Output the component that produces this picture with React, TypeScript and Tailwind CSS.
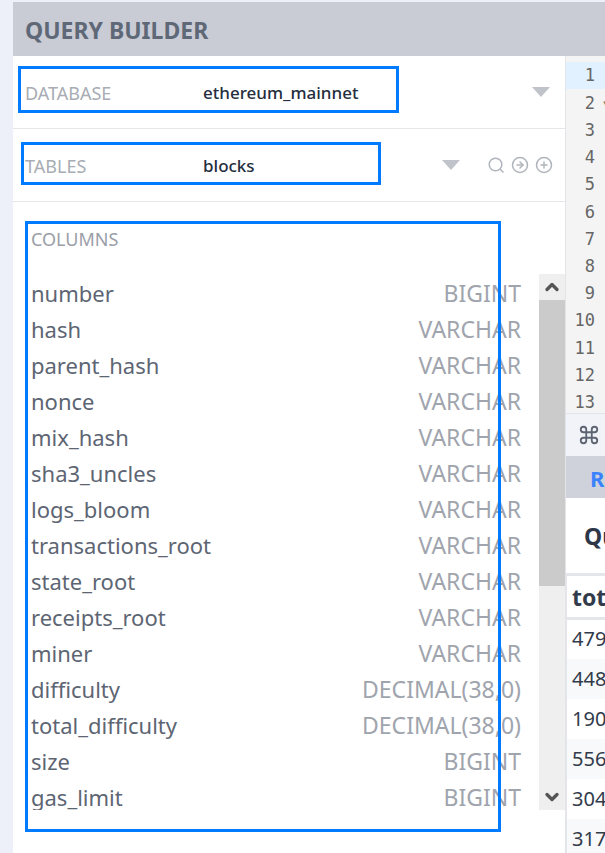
import { ChevronDown, ChevronUp, CircleArrowRight, CirclePlus, Command } from 'lucide-react';

const columns = [
  { name: 'number', type: 'BIGINT' },
  { name: 'hash', type: 'VARCHAR' },
  { name: 'parent_hash', type: 'VARCHAR' },
  { name: 'nonce', type: 'VARCHAR' },
  { name: 'mix_hash', type: 'VARCHAR' },
  { name: 'sha3_uncles', type: 'VARCHAR' },
  { name: 'logs_bloom', type: 'VARCHAR' },
  { name: 'transactions_root', type: 'VARCHAR' },
  { name: 'state_root', type: 'VARCHAR' },
  { name: 'receipts_root', type: 'VARCHAR' },
  { name: 'miner', type: 'VARCHAR' },
  { name: 'difficulty', type: 'DECIMAL(38,0)' },
  { name: 'total_difficulty', type: 'DECIMAL(38,0)' },
  { name: 'size', type: 'BIGINT' },
  { name: 'gas_limit', type: 'BIGINT' },
];

const lines = [1, 2, 3, 4, 5, 6, 7, 8, 9, 10, 11, 12, 13];
const results = ['479', '448', '190', '556', '304', '317'];

export default function App() {
  return (
    <div className="min-h-screen overflow-hidden bg-[#edf0f9] pt-0.5 pl-[13px] font-['Noto_Sans',sans-serif]">
      <header className="flex h-[54px] items-center bg-[#c9ccd5] px-3 pt-0.5">
        <h1 className="text-[23px] font-bold text-[#5f6877]">QUERY BUILDER</h1>
      </header>
      <div className="flex">
        <BuilderPanel />
        <ResultsPanel />
      </div>
    </div>
  );
}

function BuilderPanel() {
  return (
    <section className="relative min-w-0 flex-1 bg-white">
      <div className="flex h-[73px] items-center border-b border-[#e4e6ea] pr-[15px] pl-3">
        <Picker id="database" label="DATABASE" value="ethereum_mainnet" />
      </div>
      <div className="flex h-[73px] items-center border-b border-[#e4e6ea] pr-3 pl-3">
        <Picker id="tables" label="TABLES" value="blocks" />
        <div className="ml-[27px] flex gap-1.5 text-[#b0b4bc]">
          <button aria-label="Search"><SearchIcon /></button>
          <button aria-label="Open"><CircleArrowRight size={18} /></button>
          <button aria-label="Add"><CirclePlus size={18} /></button>
        </div>
      </div>

      <h2 className="mt-[25px] pl-[18px] text-[18px] leading-6 text-[#9a9ea8]">COLUMNS</h2>
      <div className="mt-[23px] flex h-[536px]">
        <ul className="min-w-0 flex-1 overflow-hidden pt-px pr-[18px] pl-[18px] text-[22px] leading-[36px]">
          {columns.map((c) => (
            <li key={c.name} className="flex justify-between">
              <span className="text-[#5d6573]">{c.name}</span>
              <span className="text-[23px] text-[#a0a4ad]">{c.type}</span>
            </li>
          ))}
        </ul>
        <div className="flex w-[26px] flex-col bg-[#efefef] text-[#555]">
          <button aria-label="Scroll up" className="flex h-[26px] items-center justify-center">
            <ChevronUp size={20} strokeWidth={4} />
          </button>
          <div className="h-[286px] bg-[#cbcbcb]" />
          <button aria-label="Scroll down" className="mt-auto flex h-[26px] items-center justify-center">
            <ChevronDown size={20} strokeWidth={4} />
          </button>
        </div>
      </div>

      {/* highlight frames drawn over the panel */}
      <div className="pointer-events-none absolute top-[10px] left-[5px] h-[47px] w-[381px] border-3 border-[#007bff]" />
      <div className="pointer-events-none absolute top-[86px] left-2 h-[43px] w-[360px] border-3 border-[#007bff]" />
      <div className="pointer-events-none absolute top-[165px] left-3 h-[611px] w-[476px] border-3 border-[#007bff]" />
    </section>
  );
}

function Picker({ id, label, value }: { id: string; label: string; value: string }) {
  return (
    <div className="flex min-w-0 flex-1 items-center">
      <label htmlFor={id} className="w-[178px] shrink-0 pt-0.5 text-[18px] text-[#a8acb4]">{label}</label>
      <select id={id} className="min-w-0 flex-1 appearance-none bg-transparent pt-0.5 text-[17px] font-medium text-[#252e3e]">
        <option>{value}</option>
      </select>
      <svg width="18" height="10" viewBox="0 0 18 10" className="shrink-0 fill-[#c0c3c9]">
        <path d="M0 0h18L9 10z" />
      </svg>
    </div>
  );
}

function SearchIcon() {
  return (
    <svg width="18" height="18" viewBox="0 0 18 18" fill="none" stroke="currentColor" strokeWidth="1.5">
      <circle cx="8.5" cy="8.5" r="6.3" />
      <path d="M13 13l3.5 3.5" />
    </svg>
  );
}

function ResultsPanel() {
  return (
    <section className="w-10 shrink-0 overflow-hidden border-l border-[#e2e4e8] bg-white">
      <div className="h-[357px] overflow-hidden bg-[#f4f4f4] pt-1.5">
        <ol className="grid h-[354px] grid-rows-[repeat(13,1fr)] font-['DejaVu_Sans_Mono',monospace] text-[17px] text-[#666]">
          {lines.map((n) => (
            <li key={n} className={`flex items-center justify-end pt-px ${n === 1 ? 'bg-[#e1f1ff]' : ''}`}>
              {n}
              <span className="w-2.5 overflow-hidden pl-[7px] text-xs text-[#8a7a66]">{n === 2 ? '▾' : ''}</span>
            </li>
          ))}
        </ol>
      </div>
      <div className="flex h-[43px] items-center border-t border-[#e2e4ea] bg-[#f1f3f9] pl-3 text-[#5d6573]">
        <Command size={22} className="shrink-0" />
      </div>
      <div className="flex h-[42px] items-center bg-[#cfd2da] pt-0.5 pl-6">
        <button className="text-[22px] font-bold text-[#3b82ff]">R</button>
      </div>
      <h2 className="flex h-[75px] items-center pt-0.5 pl-[18px] text-[23px] font-bold text-[#2d3748]">Qu</h2>
      <table className="w-full border-l border-[#e4e6ec] text-xl text-[#323b4b]">
        <thead>
          <tr className="h-11 border-y-3 border-[#e4e6ec]">
            <th className="pl-[5px] text-left text-[23px] leading-[40px] font-bold">tot</th>
          </tr>
        </thead>
        <tbody>
          {results.map((r) => (
            <tr key={r} className="h-10 even:bg-[#f8f9fb]">
              <td className="pl-[5px]">{r}</td>
            </tr>
          ))}
        </tbody>
      </table>
    </section>
  );
}
